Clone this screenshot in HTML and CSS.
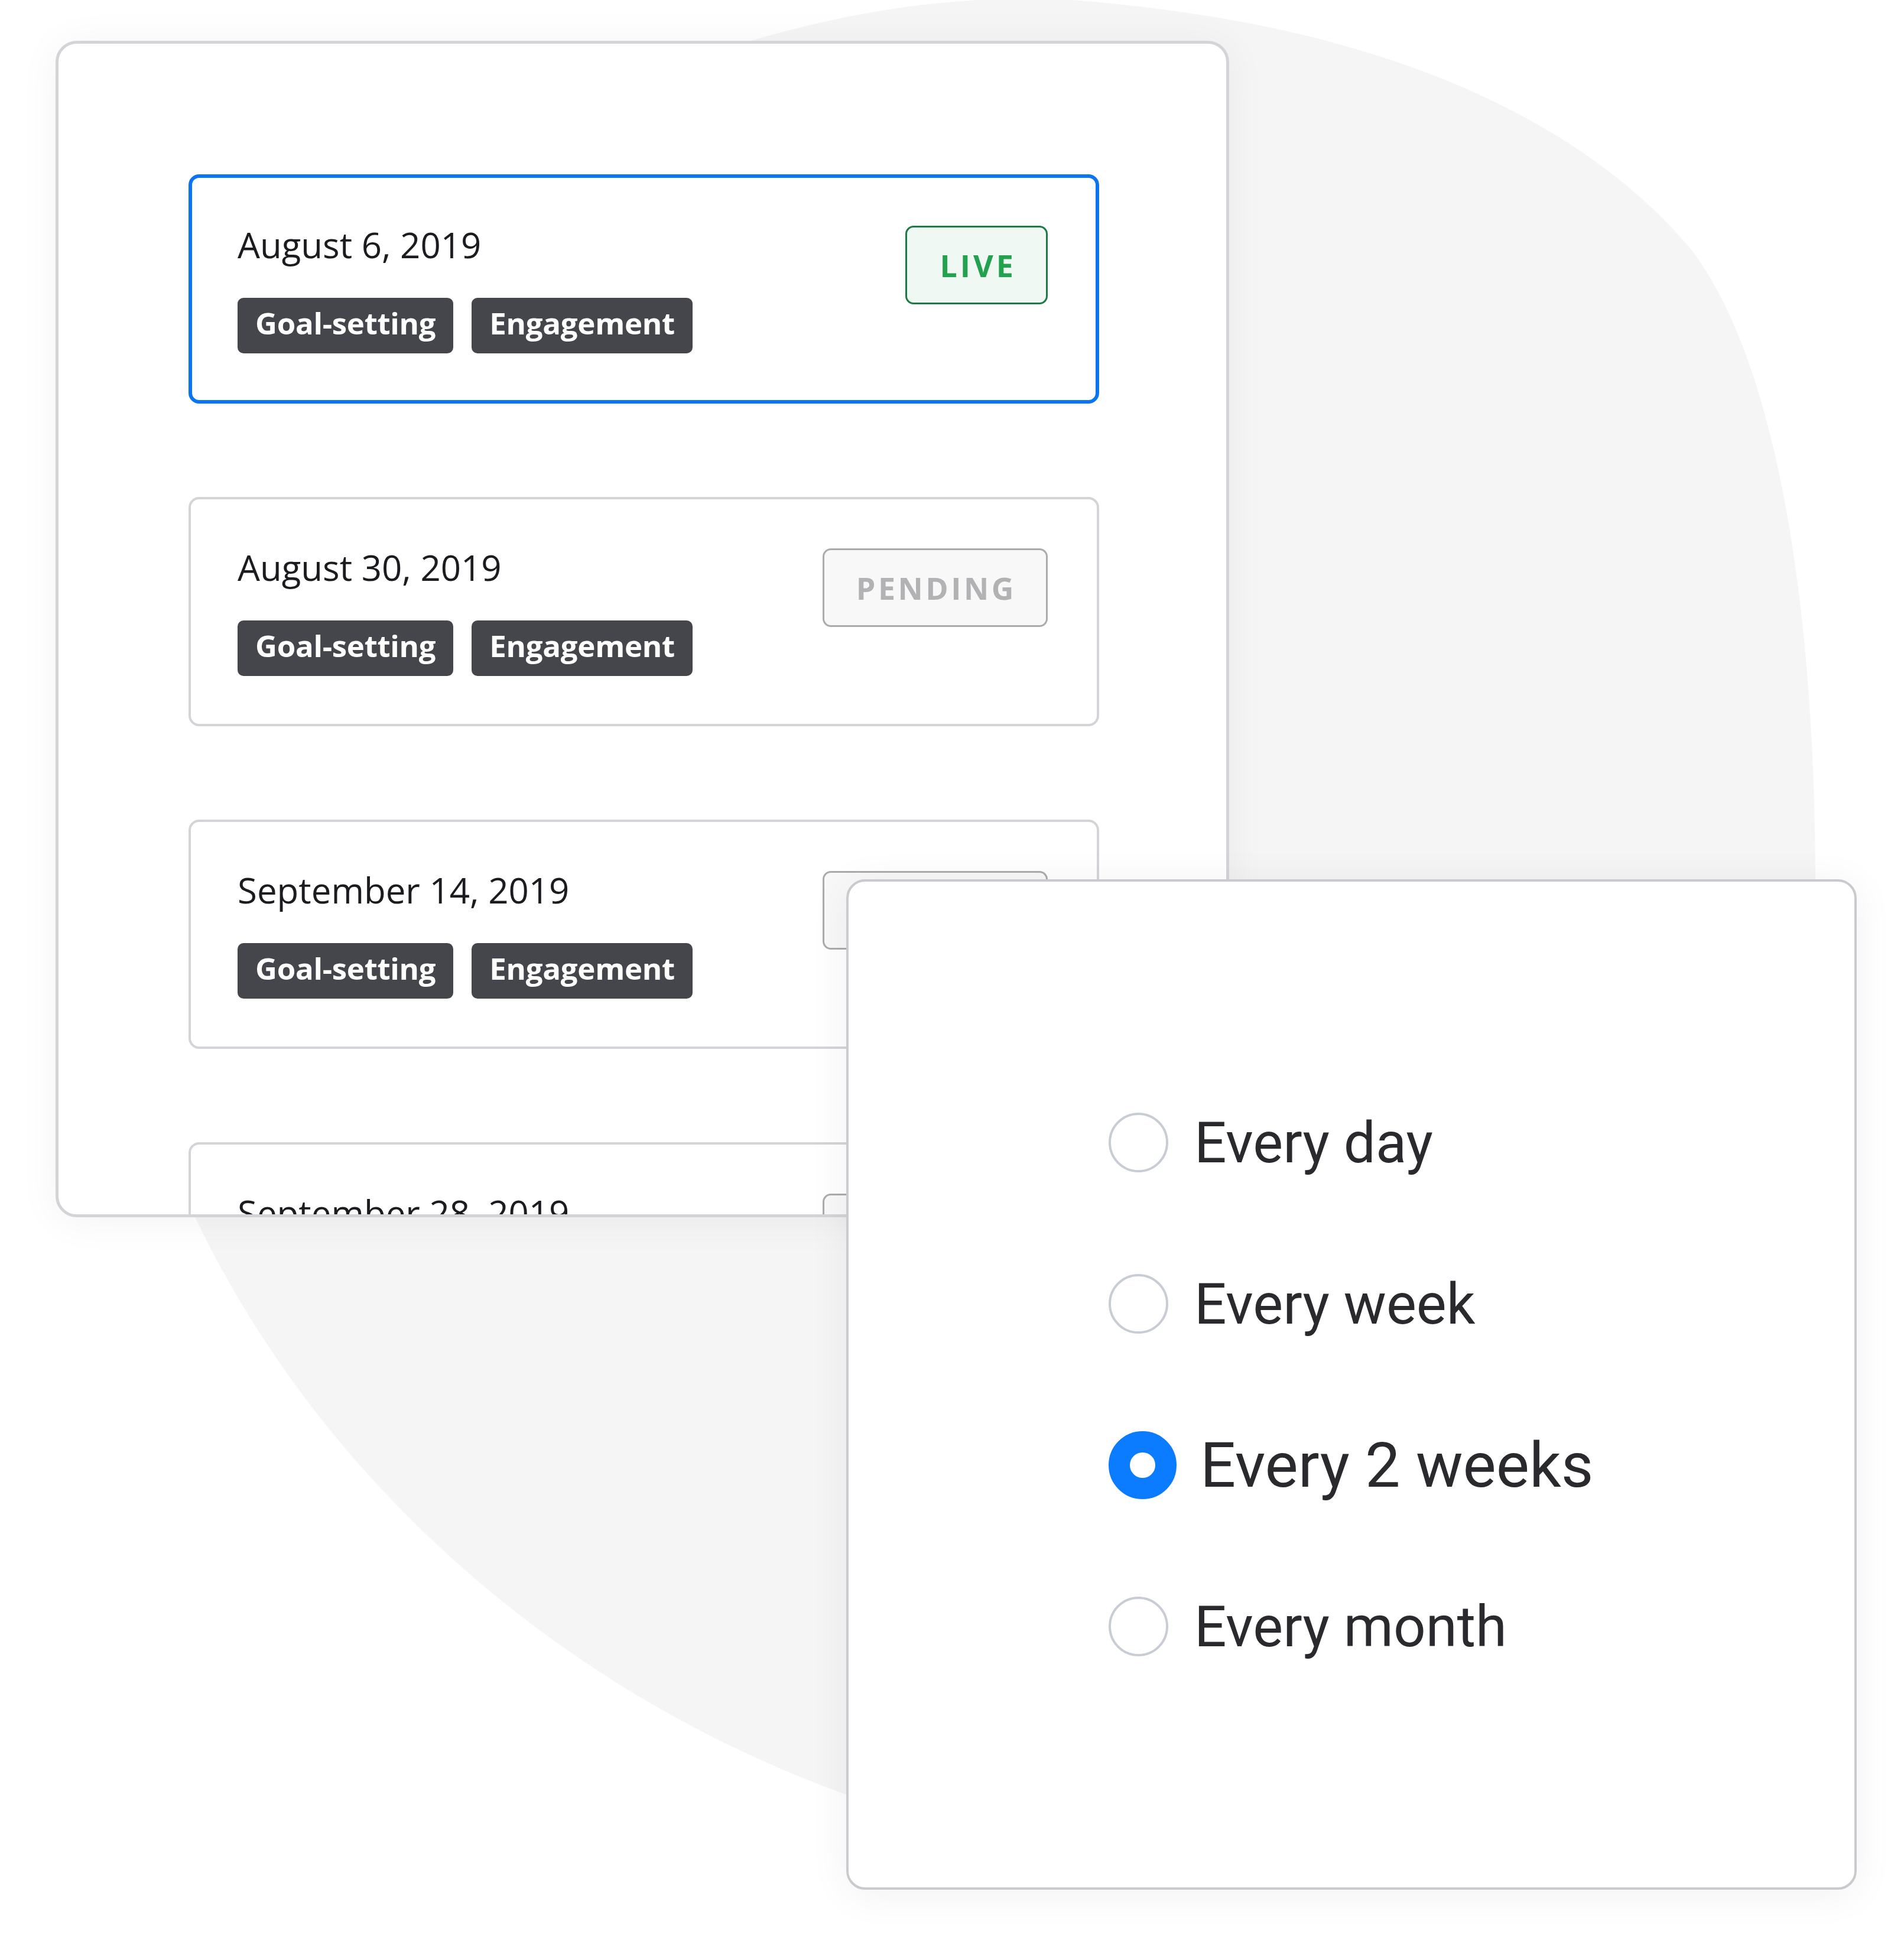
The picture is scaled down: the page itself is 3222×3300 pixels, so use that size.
FILE: index.html
```html
<!DOCTYPE html>
<html lang="en">
<head>
<meta charset="utf-8">
<title>Schedule</title>
<link rel="stylesheet" href="styles.css">
</head>
<body>
<div class="stage">
  <svg class="blob" width="3222" height="3300" viewBox="0 0 3222 3300" aria-hidden="true">
    <path d="M 1261 72 Q 1600 -30 1900 8 C 2400 60 2700 230 2860 420 C 3000 600 3072 1000 3072 1500 L 3050 2900 L 1500 3060 C 1000 2900 560 2540 330 2060 C 200 1200 600 400 1261 72 Z" fill="#f5f5f6"/>
  </svg>

  <section class="schedule-card">
    <div class="release-list">
      <article class="release is-live">
        <div class="release-info">
          <div class="release-date">August 6, 2019</div>
          <div class="tags"><span class="tag">Goal-setting</span><span class="tag">Engagement</span></div>
        </div>
        <span class="badge badge-live">LIVE</span>
      </article>
      <article class="release">
        <div class="release-info">
          <div class="release-date">August 30, 2019</div>
          <div class="tags"><span class="tag">Goal-setting</span><span class="tag">Engagement</span></div>
        </div>
        <span class="badge badge-pending">PENDING</span>
      </article>
      <article class="release">
        <div class="release-info">
          <div class="release-date">September 14, 2019</div>
          <div class="tags"><span class="tag">Goal-setting</span><span class="tag">Engagement</span></div>
        </div>
        <span class="badge badge-pending">PENDING</span>
      </article>
      <article class="release">
        <div class="release-info">
          <div class="release-date">September 28, 2019</div>
          <div class="tags"><span class="tag">Goal-setting</span><span class="tag">Engagement</span></div>
        </div>
        <span class="badge badge-pending">PENDING</span>
      </article>
    </div>
  </section>

  <section class="frequency-card">
    <ul class="options">
      <li class="option"><span class="radio-slot"><span class="radio"></span></span><span class="label">Every day</span></li>
      <li class="option"><span class="radio-slot"><span class="radio"></span></span><span class="label">Every week</span></li>
      <li class="option is-selected"><span class="radio-slot"><span class="radio"></span></span><span class="label">Every 2 weeks</span></li>
      <li class="option"><span class="radio-slot"><span class="radio"></span></span><span class="label">Every month</span></li>
    </ul>
  </section>
</div>
</body>
</html>
```

FILE: styles.css
```css
html, body {
  margin: 0;
  padding: 0;
  background: #ffffff;
}

.stage {
  position: relative;
  width: 3222px;
  height: 3300px;
  box-sizing: border-box;
  padding: 69px 0 0 94px;
  overflow: hidden;
}

.blob {
  position: absolute;
  left: 0;
  top: 0;
  z-index: 0;
}

/* Left card: list of releases */
.schedule-card {
  position: relative;
  z-index: 1;
  width: 1986px;
  height: 1991px;
  box-sizing: border-box;
  border: 5px solid #d3d4d7;
  border-radius: 36px;
  background: #ffffff;
  box-shadow: 0 6px 70px rgba(0, 0, 0, 0.05);
  overflow: hidden;
  padding: 221px 215px 0 220px;
}

.release-list {
  display: flex;
  flex-direction: column;
  gap: 158px;
}

.release {
  flex-shrink: 0;
  display: flex;
  justify-content: space-between;
  align-items: flex-start;
  border: 4px solid #d3d4d7;
  border-radius: 18px;
  padding: 83px 83px 81px 79px;
  background: #ffffff;
}

.release.is-live {
  border: 6px solid #0b74f0;
  padding: 81px 81px 79px 77px;
}

.release-date {
  font-family: "Open Sans", "Noto Sans", sans-serif;
  font-weight: 400;
  font-size: 60px;
  line-height: 1.2;
  margin-top: -4px;
  color: #1c1c20;
}

.tags {
  display: flex;
  gap: 31px;
  margin-top: 54px;
}

.tag {
  background: #45464b;
  color: #ffffff;
  font-family: "Open Sans", "Noto Sans", sans-serif;
  font-weight: 700;
  font-size: 51px;
  letter-spacing: -0.3px;
  line-height: 84px;
  padding: 0 30px 10px;
  border-radius: 10px;
}

.badge {
  box-sizing: border-box;
  height: 133px;
  font-family: "Open Sans", "Noto Sans", sans-serif;
  font-weight: 700;
  font-size: 52px;
  line-height: 127px;
  padding: 0 50px 0 55px;
  border: 3px solid;
  border-radius: 14px;
  text-align: center;
}

.badge-live {
  letter-spacing: 5px;
  color: #22a24e;
  background: #f0f8f3;
  border-color: #1d7a47;
}

.badge-pending {
  letter-spacing: 4.5px;
  padding: 0 50px 0 54px;
  color: #b2b2b4;
  background: #f8f8f9;
  border-color: #ababad;
}

/* Right card: frequency options */
.frequency-card {
  position: absolute;
  z-index: 2;
  left: 1432px;
  top: 1488px;
  width: 1710px;
  height: 1710px;
  box-sizing: border-box;
  border: 4px solid #c9cacd;
  border-radius: 32px;
  background: #ffffff;
  box-shadow: 0 8px 70px rgba(0, 0, 0, 0.06);
  display: flex;
  flex-direction: column;
  justify-content: center;
  padding-left: 440px;
}

.options {
  list-style: none;
  margin: 0;
  padding: 0;
  display: flex;
  flex-direction: column;
  gap: 153px;
}

.option {
  display: flex;
  align-items: center;
  height: 120px;
  gap: 30px;
}

.radio-slot {
  width: 115px;
  height: 115px;
  flex-shrink: 0;
  display: flex;
  align-items: center;
  justify-content: flex-start;
}

.radio {
  box-sizing: border-box;
  width: 101px;
  height: 101px;
  border: 4px solid #c8ccd4;
  border-radius: 50%;
  background: #ffffff;
}

.option.is-selected .radio {
  width: 115px;
  height: 115px;
  border: 36px solid #0b7cff;
}

.label {
  font-family: Roboto, "Noto Sans", sans-serif;
  font-weight: 400;
  font-size: 96px;
  line-height: 1;
  color: #2a2a2e;
  white-space: nowrap;
}

.option.is-selected .label {
  font-size: 106px;
  margin-left: 10px;
}
```
